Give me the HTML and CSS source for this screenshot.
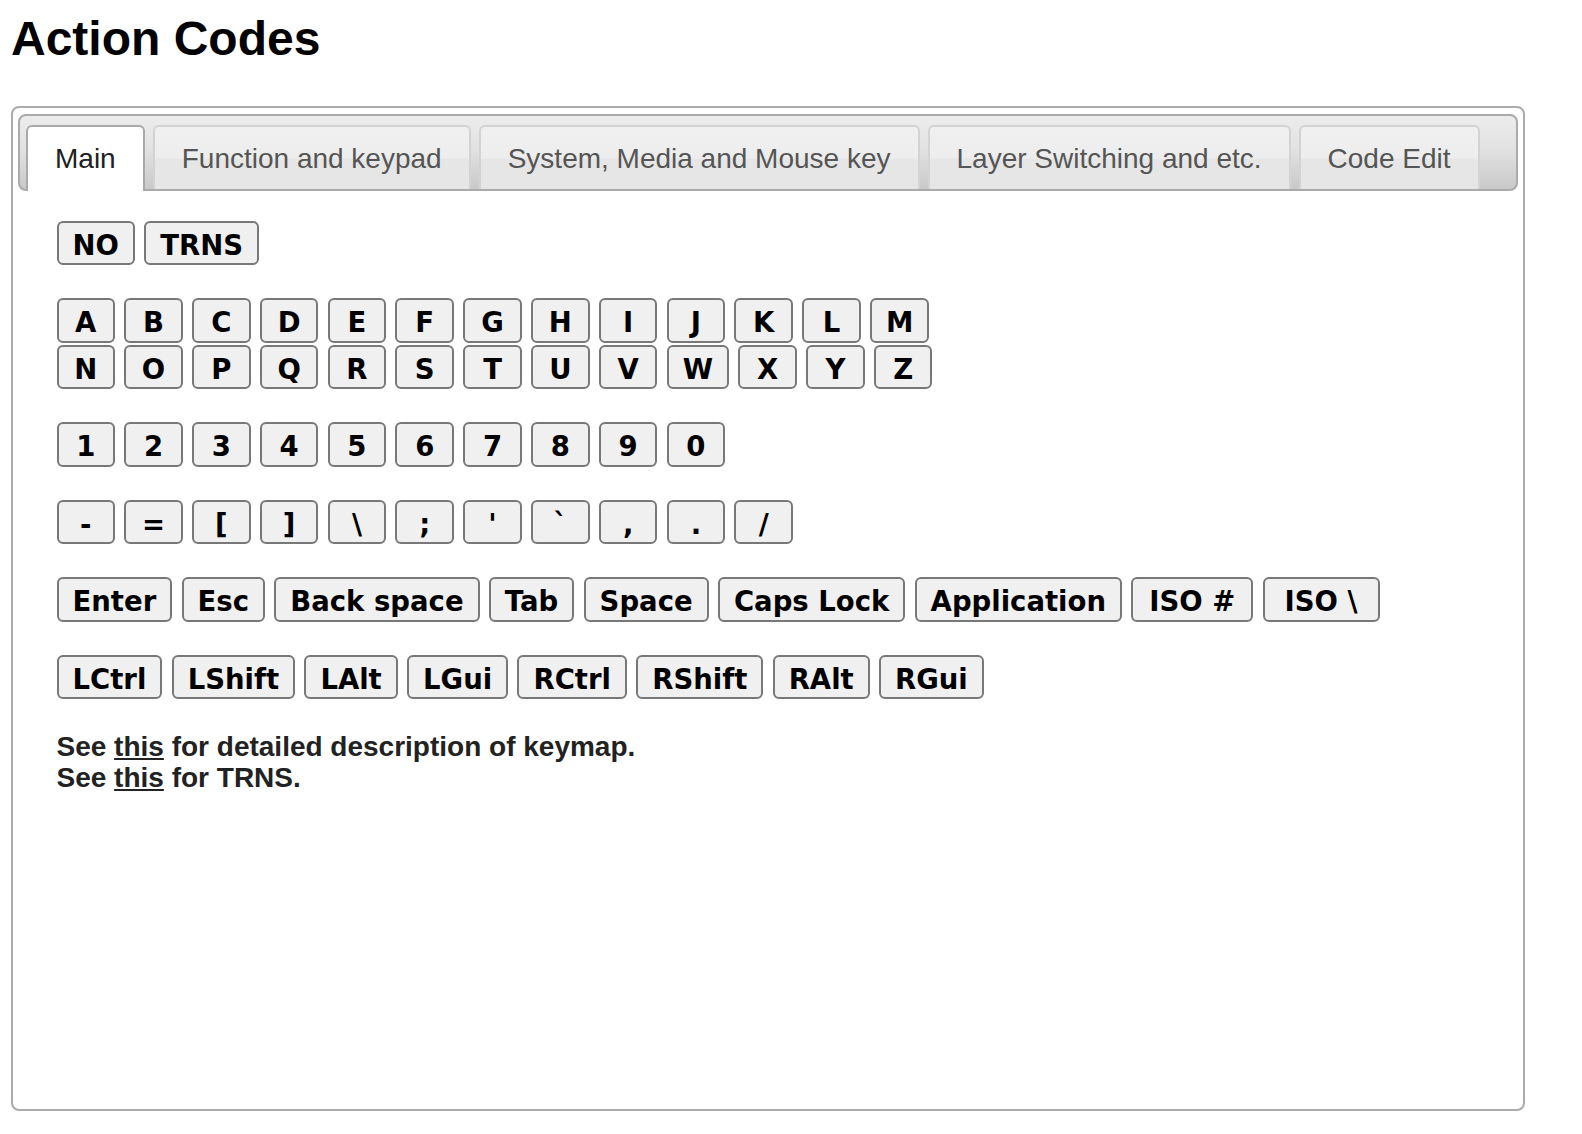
FILE: index.html
```html
<!DOCTYPE html>
<html lang="en">
<head>
<meta charset="utf-8">
<title>Action Codes</title>
<link rel="stylesheet" href="styles.css">
</head>
<body>
<h1 class="title">Action Codes</h1>
<div class="tabs">
  <ul class="tab-nav">
    <li class="tab active">Main</li>
    <li class="tab">Function and keypad</li>
    <li class="tab">System, Media and Mouse key</li>
    <li class="tab">Layer Switching and etc.</li>
    <li class="tab">Code Edit</li>
  </ul>
  <div class="panel">
    <div class="group">
      <div class="row"><span class="key">NO</span><span class="key">TRNS</span></div>
    </div>
    <div class="group">
      <div class="row"><span class="key">A</span><span class="key">B</span><span class="key">C</span><span class="key">D</span><span class="key">E</span><span class="key">F</span><span class="key">G</span><span class="key">H</span><span class="key">I</span><span class="key">J</span><span class="key">K</span><span class="key">L</span><span class="key">M</span></div>
      <div class="row"><span class="key">N</span><span class="key">O</span><span class="key">P</span><span class="key">Q</span><span class="key">R</span><span class="key">S</span><span class="key">T</span><span class="key">U</span><span class="key">V</span><span class="key">W</span><span class="key">X</span><span class="key">Y</span><span class="key">Z</span></div>
    </div>
    <div class="group">
      <div class="row"><span class="key">1</span><span class="key">2</span><span class="key">3</span><span class="key">4</span><span class="key">5</span><span class="key">6</span><span class="key">7</span><span class="key">8</span><span class="key">9</span><span class="key">0</span></div>
    </div>
    <div class="group">
      <div class="row"><span class="key">-</span><span class="key">=</span><span class="key">[</span><span class="key">]</span><span class="key">\</span><span class="key">;</span><span class="key">'</span><span class="key">`</span><span class="key">,</span><span class="key">.</span><span class="key">/</span></div>
    </div>
    <div class="group">
      <div class="row"><span class="key">Enter</span><span class="key">Esc</span><span class="key">Back space</span><span class="key">Tab</span><span class="key">Space</span><span class="key">Caps Lock</span><span class="key">Application</span><span class="key key-iso-hash">ISO #</span><span class="key key-iso-bs">ISO \</span></div>
    </div>
    <div class="group">
      <div class="row"><span class="key">LCtrl</span><span class="key">LShift</span><span class="key">LAlt</span><span class="key">LGui</span><span class="key">RCtrl</span><span class="key">RShift</span><span class="key">RAlt</span><span class="key">RGui</span></div>
    </div>
    <p class="note">See <a class="link" href="#">this</a> for detailed description of keymap.<br>See <a class="link" href="#">this</a> for TRNS.</p>
  </div>
</div>
</body>
</html>
```
FILE: styles.css
```css
html, body {
  margin: 0;
  padding: 0;
  background: #fff;
}
body {
  padding: 11px 11px;
  font-family: "Liberation Sans", Arial, Helvetica, sans-serif;
}
.title {
  margin: 0 0 39.5px 0;
  font-size: 48px;
  font-weight: bold;
  line-height: normal;
  color: #000;
}
.tabs {
  box-sizing: border-box;
  width: 1514px;
  height: 1005px;
  border: 2px solid #ababab;
  border-radius: 8px;
  padding: 6px 5px;
}
.tab-nav {
  box-sizing: border-box;
  list-style: none;
  margin: 0;
  height: 77px;
  padding: 9px 6px 0;
  border: 2px solid #aaaaaa;
  border-radius: 8px;
  background: linear-gradient(#ececec 0%, #e2e2e2 45%, #c9c9c9 100%);
  display: flex;
  align-items: flex-end;
  gap: 8px;
}
.tab {
  box-sizing: border-box;
  height: 64px;
  padding: 16px 27px 0;
  border: 2px solid #d3d3d3;
  border-bottom: none;
  border-radius: 6px 6px 0 0;
  background: linear-gradient(#f0f0f0 0%, #ededed 50%, #e6e6e6 52%, #e6e6e6 100%);
  color: #555555;
  font-size: 28px;
  line-height: normal;
  white-space: nowrap;
}
.tab.active {
  height: 66px;
  margin-bottom: -2px;
  border-color: #aaaaaa;
  background: #ffffff;
  color: #212121;
}
.panel {
  padding: 30px 0 0 38.5px;
  display: flex;
  flex-direction: column;
  align-items: flex-start;
  gap: 33px;
}
.group {
  display: flex;
  flex-direction: column;
  gap: 2px;
}
.row {
  display: flex;
  gap: 9.3px;
}
.key {
  box-sizing: border-box;
  min-width: 58.5px;
  padding: 7px 14px 2.5px;
  border: 2px solid #787878;
  border-radius: 6px;
  background: #f0f0f0;
  color: #000;
  font-family: "DejaVu Sans", Verdana, sans-serif;
  font-weight: bold;
  font-size: 27.5px;
  line-height: 31px;
  text-align: center;
  white-space: pre;
}
.key-iso-hash {
  min-width: 122px;
}
.key-iso-bs {
  min-width: 117px;
}
.note {
  margin: -1px 0 0 0;
  font-size: 28px;
  line-height: 31px;
  font-weight: bold;
  color: #222222;
}
.link {
  color: #222222;
  text-decoration: underline;
}
```
